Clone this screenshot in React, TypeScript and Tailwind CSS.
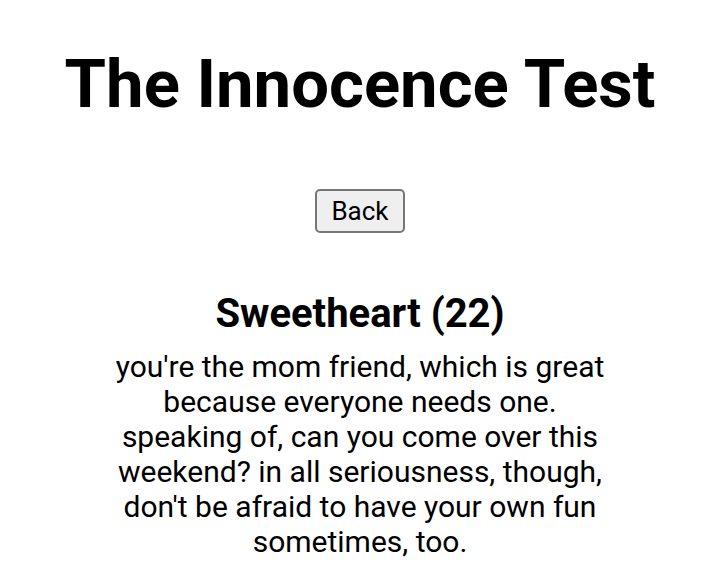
import React from 'react';

const App: React.FC = () => {
  return (
    <div className="min-h-screen bg-white text-black font-['Roboto',sans-serif] flex flex-col items-center pt-[44px]">
      <h1 className="text-[67px] font-bold leading-[80px]">The Innocence Test</h1>

      <button className="mt-[65px] h-[44px] w-[90px] border-2 border-[#767676] rounded-[5px] bg-[#efefef] text-[26px] leading-none">
        Back
      </button>

      <div className="mt-[57px] flex flex-col items-center w-[500px] text-center">
        <h2 className="text-[40px] font-bold leading-[48px]">Sweetheart (22)</h2>
        <p className="mt-[11px] text-[30px] leading-[35px]">
          you're the mom friend, which is great because everyone needs one. speaking of, can you come over this
          weekend? in all seriousness, though, don't be afraid to have your own fun sometimes, too.
        </p>
      </div>
    </div>
  );
};

export default App;
